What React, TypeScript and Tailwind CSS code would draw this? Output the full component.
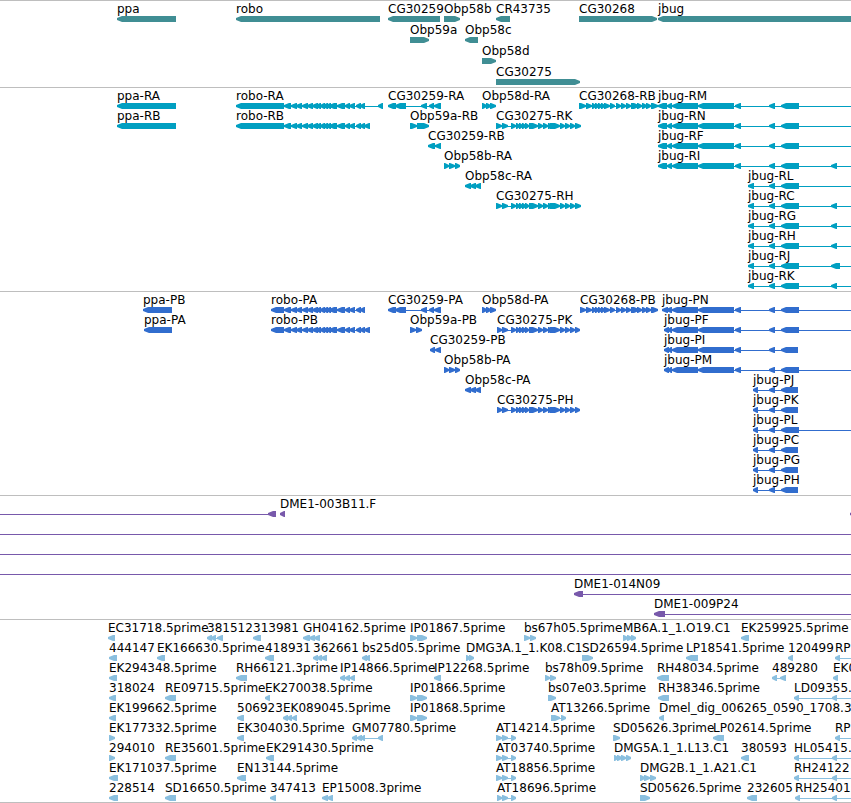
import React from 'react';

type Span = [number, number];

interface Feature {
  x: number;
  label?: string;
  dir: 'left' | 'right';
  blocks: Span[];
  // connector line, when it reaches past the blocks
  line?: Span;
}

const FAR = 4000;

const left = (x: number, label: string, blocks: Span[], line?: Span): Feature => ({ x, label, dir: 'left', blocks, line });
const right = (x: number, label: string, blocks: Span[], line?: Span): Feature => ({ x, label, dir: 'right', blocks, line });

const roboExons: Span[] = [
  [284, 291], [291, 297], [296, 302], [302, 308], [307, 313], [312, 318], [316, 321], [320, 325], [323, 328],
  [326, 331], [329, 337], [337, 345], [345, 350], [349, 355], [356, 361], [360, 365],
];
const cg30259: Span[] = [[388, 396], [395, 406], [421, 427], [429, 434], [434, 441]];
const obp58b: Span[] = [[444, 449], [449, 455], [455, 460]];
const obp58c: Span[] = [[465, 471], [470, 476], [475, 481]];
const obp58d: Span[] = [[482, 487], [486, 491], [490, 496]];
const cg30275: Span[] = [
  [502, 508], [511, 516], [516, 520], [519, 523], [522, 526], [525, 529], [529, 538], [538, 543], [543, 548],
  [548, 553], [550, 560], [560, 565], [565, 570], [570, 575],
];
const cg30268: Span[] = [
  [586, 592], [592, 596], [595, 599], [598, 602], [601, 605], [604, 610], [610, 615], [616, 621], [621, 626],
  [626, 631], [631, 639], [637, 642], [642, 647], [646, 651], [651, 658],
];
const jbugBody: Span[] = [[672, 698], [698, 734], [735, 741], [769, 775]];
const jbugLong: Span[] = [[658, 667], [667, 672], ...jbugBody, [781, 799]];
const jbugShort: Span[] = [[748, 754], [769, 775], [781, 799]];
const jbugProtein: Span[] = [[753, 758], [769, 775], [781, 798]];

const genes: Feature[][] = [
  [
    left(117, 'ppa', [[117, 176]]),
    left(236, 'robo', [[236, 380]]),
    left(388, 'CG30259', [[388, 440]]),
    right(444, 'Obp58b', [[444, 460]]),
    left(496, 'CR43735', [[496, 510]]),
    right(579, 'CG30268', [[579, 657]]),
    left(658, 'jbug', [[658, FAR]]),
  ],
  [right(410, 'Obp59a', [[410, 429]]), left(465, 'Obp58c', [[465, 478]])],
  [right(482, 'Obp58d', [[482, 496]])],
  [right(496, 'CG30275', [[496, 580]])],
];

const transcripts: Feature[][] = [
  [
    left(117, 'ppa-RA', [[117, 176]]),
    left(236, 'robo-RA', [[236, 284], ...roboExons, [378, 383]]),
    left(388, 'CG30259-RA', cg30259),
    right(482, 'Obp58d-RA', obp58d),
    right(579, 'CG30268-RB', [[579, 586], ...cg30268]),
    left(658, 'jbug-RM', jbugLong, [658, FAR]),
  ],
  [
    left(117, 'ppa-RB', [[117, 176]]),
    left(236, 'robo-RB', [[236, 284], ...roboExons, [364, 370]]),
    right(410, 'Obp59a-RB', [[410, 417], [417, 429]]),
    right(496, 'CG30275-RK', [[496, 502], ...cg30275, [575, 581]]),
    left(658, 'jbug-RN', jbugLong, [658, FAR]),
  ],
  [left(428, 'CG30259-RB', [[428, 435], [435, 441]]), left(658, 'jbug-RF', jbugLong, [658, FAR])],
  [right(444, 'Obp58b-RA', obp58b), left(658, 'jbug-RI', [...jbugLong, [831, 837]], [658, FAR])],
  [left(465, 'Obp58c-RA', obp58c), left(748, 'jbug-RL', jbugShort, [748, FAR])],
  [
    right(496, 'CG30275-RH', [[496, 502], ...cg30275, [575, 581]]),
    left(748, 'jbug-RC', [...jbugShort, [831, 837]], [748, FAR]),
  ],
  [left(748, 'jbug-RG', [...jbugShort, [831, 837]], [748, FAR])],
  [left(748, 'jbug-RH', [...jbugShort, [831, 837]], [748, FAR])],
  [left(748, 'jbug-RJ', [...jbugShort, [831, 840]], [748, FAR])],
  [left(748, 'jbug-RK', [...jbugShort, [831, 837]], [748, FAR])],
];

const proteins: Feature[][] = [
  [
    left(143, 'ppa-PB', [[143, 172]]),
    left(271, 'robo-PA', [[271, 284], ...roboExons]),
    left(388, 'CG30259-PA', cg30259),
    right(482, 'Obp58d-PA', obp58d),
    right(580, 'CG30268-PB', [[580, 586], ...cg30268]),
    left(662, 'jbug-PN', [[662, 668], [666, 672], ...jbugBody, [781, 799]], [662, FAR]),
  ],
  [
    left(144, 'ppa-PA', [[144, 172]]),
    left(271, 'robo-PB', [[271, 284], ...roboExons, [364, 370]]),
    right(410, 'Obp59a-PB', [[410, 416], [416, 422]]),
    right(497, 'CG30275-PK', [[497, 502], ...cg30275, [575, 580]]),
    left(664, 'jbug-PF', [[664, 669], [668, 672], ...jbugBody, [781, 799]], [664, FAR]),
  ],
  [
    left(430, 'CG30259-PB', [[430, 435], [435, 441]]),
    left(664, 'jbug-PI', [[664, 669], [668, 672], ...jbugBody, [781, 798]]),
  ],
  [
    right(444, 'Obp58b-PA', obp58b),
    left(664, 'jbug-PM', [[664, 669], [668, 672], ...jbugBody, [781, 799]], [664, FAR]),
  ],
  [left(465, 'Obp58c-PA', obp58c), left(753, 'jbug-PJ', jbugProtein)],
  [right(497, 'CG30275-PH', [[497, 502], ...cg30275, [575, 580]]), left(753, 'jbug-PK', jbugProtein)],
  [left(753, 'jbug-PL', [[753, 758], [769, 775], [781, 799]], [753, FAR])],
  [left(753, 'jbug-PC', jbugProtein)],
  [left(753, 'jbug-PG', jbugProtein)],
  [left(753, 'jbug-PH', jbugProtein)],
];

const through: Feature = { x: 0, dir: 'left', blocks: [], line: [0, FAR] };

const bacs: Feature[][] = [
  [
    { x: 0, dir: 'left', blocks: [[268, 276]], line: [0, 276] },
    left(280, 'DME1-003B11.F', [[280, 285]]),
    { x: 850, dir: 'left', blocks: [[850, 860]] },
  ],
  [through],
  [through],
  [through],
  [left(574, 'DME1-014N09', [[574, 583]], [574, FAR])],
  [left(654, 'DME1-009P24', [[654, 665]], [654, FAR])],
];

const ests: Feature[][] = [
  [
    left(108, 'EC31718.5prime', [[108, 115]]),
    left(207, '381512', [[207, 212], [211, 216], [217, 223]]),
    left(253, '313981', [[253, 261]]),
    left(303, 'GH04162.5prime', [[303, 310], [309, 315], [314, 320]]),
    right(410, 'IP01867.5prime', [[410, 417], [417, 427]]),
    right(524, 'bs67h05.5prime', [[524, 530], [530, 536]]),
    right(623, 'MB6A.1_1.O19.C1', [[623, 628], [627, 632], [631, 636]]),
    left(741, 'EK259925.5prime', [[741, 749]]),
  ],
  [
    left(109, '444147', [[109, 117]]),
    left(157, 'EK166630.5prime', [[157, 165]]),
    left(265, '418931', [[265, 274]]),
    left(313, '362661', [[313, 318], [317, 322], [321, 327]]),
    left(362, 'bs25d05.5prime', [[362, 367], [365, 370]]),
    right(466, 'DMG3A.1_1.K08.C1', [[466, 470], [469, 474]]),
    right(582, 'SD26594.5prime', [[582, 593]]),
    left(686, 'LP18541.5prime', [[686, 698]]),
    left(788, '120499', [[788, 793]]),
    left(835, 'RP', [[835, 840]], [835, FAR]),
  ],
  [
    left(109, 'EK294348.5prime', [[109, 117]]),
    left(236, 'RH66121.3prime', [[236, 247]]),
    left(340, 'IP14866.5prime', [[340, 345], [345, 350], [350, 355]]),
    left(434, 'IP12268.5prime', [[434, 441]]),
    right(545, 'bs78h09.5prime', [[545, 550], [550, 556]]),
    left(657, 'RH48034.5prime', [[657, 669]]),
    left(772, '489280', [[772, 777], [780, 786]]),
    left(833, 'EK0', [[833, 838]]),
  ],
  [
    left(109, '318024', [[109, 116]]),
    left(165, 'RE09715.5prime', [[165, 176]]),
    left(265, 'EK270038.5prime', [[265, 270]]),
    right(410, 'IP01866.5prime', [[410, 417], [417, 427]]),
    right(548, 'bs07e03.5prime', [[548, 556]]),
    left(658, 'RH38346.5prime', [[658, 669]]),
    left(794, 'LD09355.', [[794, 799], [832, 837]], [794, FAR]),
  ],
  [
    left(109, 'EK199662.5prime', [[109, 116]]),
    left(237, '506923', [[237, 244]]),
    left(283, 'EK089045.5prime', [[283, 288], [287, 292], [292, 297]]),
    right(410, 'IP01868.5prime', [[410, 417], [417, 427]]),
    right(551, 'AT13266.5prime', [[551, 560], [561, 566]]),
    left(659, 'Dmel_dig_006265_0590_1708.3', [[659, 664]]),
  ],
  [
    right(109, 'EK177332.5prime', [[109, 115]]),
    left(237, 'EK304030.5prime', [[237, 244]]),
    left(352, 'GM07780.5prime', [[352, 357], [357, 362], [361, 365], [378, 383]]),
    right(496, 'AT14214.5prime', [[496, 502], [502, 508], [511, 516]]),
    right(613, 'SD05626.3prime', [[613, 620]]),
    left(713, 'LP02614.5prime', [[713, 724]]),
    left(835, 'RP', [[835, 840]], [835, FAR]),
  ],
  [
    right(109, '294010', [[109, 115]]),
    left(165, 'RE35601.5prime', [[165, 176]]),
    left(266, 'EK291430.5prime', [[266, 274]]),
    right(496, 'AT03740.5prime', [[496, 502], [502, 508], [511, 516]]),
    right(614, 'DMG5A.1_1.L13.C1', [[614, 618], [617, 622], [621, 626], [626, 631]]),
    left(741, '380593', [[741, 749]]),
    left(794, 'HL05415.', [[794, 799], [832, 837]], [794, FAR]),
  ],
  [
    left(109, 'EK171037.5prime', [[109, 118]]),
    left(237, 'EN13144.5prime', [[237, 246]]),
    right(496, 'AT18856.5prime', [[496, 502], [502, 508], [511, 516]]),
    right(640, 'DMG2B.1_1.A21.C1', [[640, 645], [644, 650], [650, 656]]),
    left(794, 'RH24122', [[794, 799], [832, 837]], [794, FAR]),
  ],
  [
    left(109, '228514', [[109, 118]]),
    left(165, 'SD16650.5prime', [[165, 176]]),
    left(270, '347413', [[270, 276]]),
    left(322, 'EP15008.3prime', [[322, 328], [327, 333]]),
    right(497, 'AT18696.5prime', [[497, 502], [502, 508], [511, 516]]),
    right(640, 'SD05626.5prime', [[640, 650]]),
    left(747, '232605', [[747, 757]]),
    left(795, 'RH25401', [[795, 800], [832, 837]], [795, FAR]),
  ],
];

// blunt two pixel tip that widens to the full bar height
const arrow = ([a, b]: Span, dir: Feature['dir']) => {
  const tip = Math.min(5, b - a - 1);
  return dir === 'left'
    ? `M${a} 2L${a + tip} 0H${b}V6H${a + tip}L${a} 4Z`
    : `M${b} 2L${b - tip} 0H${a}V6H${b - tip}L${b} 4Z`;
};

const Glyph: React.FC<{ feature: Feature }> = ({ feature }) => {
  const { blocks, dir } = feature;
  const [from, to] = feature.line ?? [blocks[0][0], blocks[blocks.length - 1][1]];
  const hasLine = feature.line || blocks.length > 1;

  return (
    <g>
      {hasLine && <rect x={from} y={3} width={to - from} height={1} />}
      {blocks.map((block, i) => (
        <path key={i} d={arrow(block, dir)} />
      ))}
    </g>
  );
};

interface TrackProps {
  name: string;
  rows: Feature[][];
  className: string;
  rowClassName?: string;
}

const Track: React.FC<TrackProps> = ({ name, rows, className, rowClassName = 'h-5' }) => (
  <section aria-label={name} className={`flex flex-col border-t border-[#bebebe] pt-px ${className}`}>
    {rows.map((row, i) => (
      <div key={i} className={`flex flex-col ${rowClassName}`}>
        <div className="relative h-3.5 text-xs leading-[14px] text-black">
          {row.map((f) => f.label && (
            <span key={f.x} className="absolute top-0 whitespace-nowrap" style={{ left: f.x }}>
              {f.label}
            </span>
          ))}
        </div>
        <svg className="h-1.5 w-full shrink-0 fill-current" aria-hidden="true">
          {row.map((f) => (
            <Glyph key={f.x} feature={f} />
          ))}
        </svg>
      </div>
    ))}
  </section>
);

const App: React.FC = () => (
  <main className="w-full overflow-hidden border-b border-[#bebebe] bg-white font-['DejaVu_Sans',sans-serif]">
    <Track name="Genes" rows={genes} className="pb-px text-[#408e94]" rowClassName="h-[21px]" />
    <Track name="Transcripts" rows={transcripts} className="pb-0.5 text-[#009fc1]" />
    <Track name="Proteins" rows={proteins} className="pb-0.5 text-[#316dce]" />
    <Track name="BACs" rows={bacs} className="pb-0.5 text-[#7859ab]" />
    <Track name="ESTs" rows={ests} className="pb-px text-[#8abfdf]" />
  </main>
);

export default App;
